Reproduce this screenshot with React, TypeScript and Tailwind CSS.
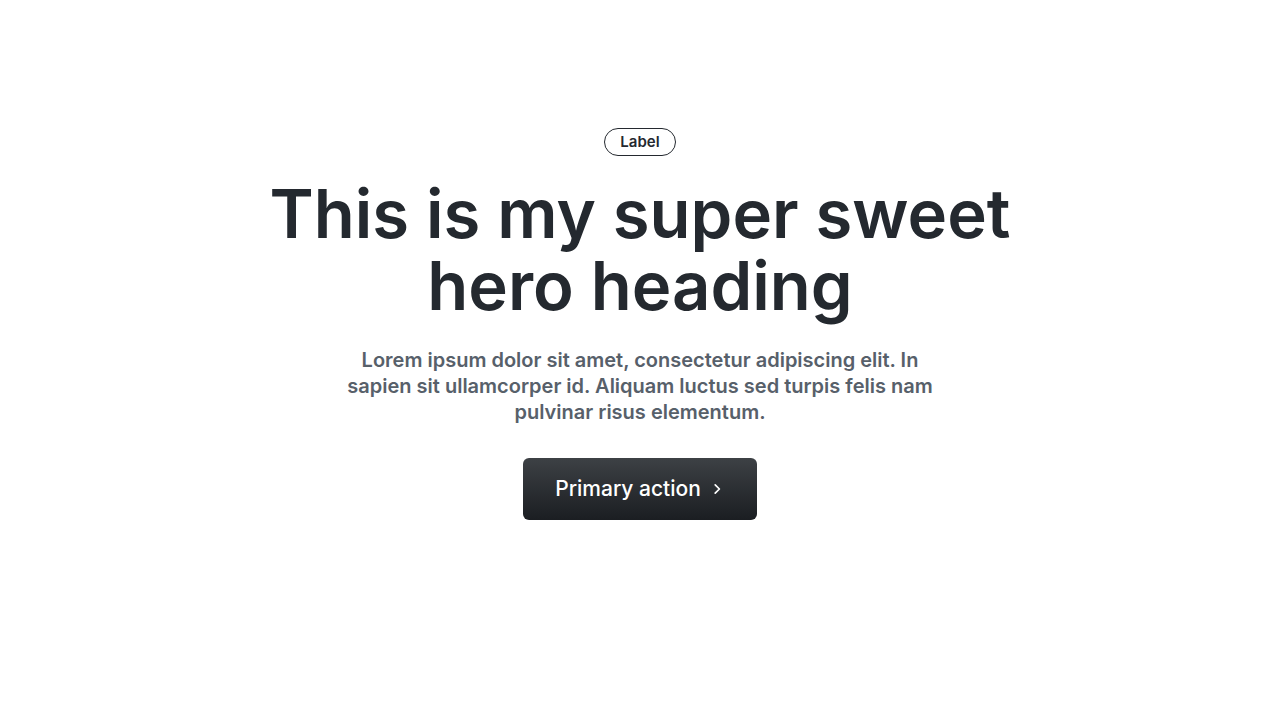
export default function App() {
  return (
    <main className="flex min-h-screen flex-col items-center bg-white px-6 pt-32 pb-16 text-center font-['Inter',sans-serif] text-[#24292f]">
      <span className="rounded-full border border-[#24292f] px-[15px] py-[3px] text-[15px]/5 font-semibold">
        Label
      </span>
      <h1 className="mt-[22px] max-w-[780px] text-[67px]/[72px] font-semibold">
        This is my super sweet hero heading
      </h1>
      <p className="mt-[25px] max-w-[600px] text-[20px]/[26px] font-semibold text-[#57606a]">
        Lorem ipsum dolor sit amet, consectetur adipiscing elit. In sapien sit ullamcorper id. Aliquam luctus sed turpis felis nam pulvinar risus elementum.
      </p>
      <button
        type="button"
        className="mt-[33px] flex items-center gap-2 rounded-md bg-linear-to-b from-[#3d4145] to-[#1b1e22] px-8 py-4 text-[21px]/[30px] font-medium text-white"
      >
        Primary action
        <svg viewBox="0 0 16 16" className="size-4" fill="none" aria-hidden="true">
          <path d="M6.2 3.8L10.4 8L6.2 12.2" stroke="currentColor" strokeWidth="1.7" strokeLinecap="round" strokeLinejoin="round" />
        </svg>
      </button>
    </main>
  );
}
